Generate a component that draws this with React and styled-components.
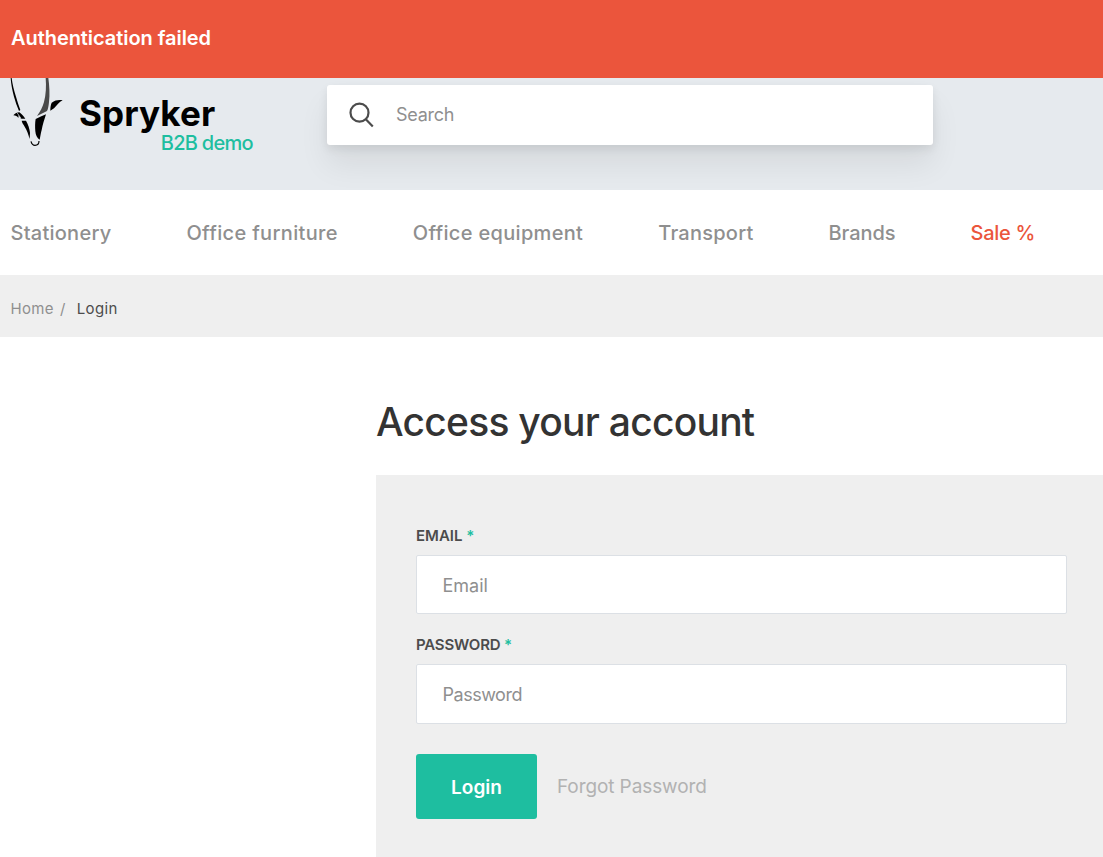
import React from "react";
import styled, { createGlobalStyle } from "styled-components";

const Global = createGlobalStyle`
  * { box-sizing: border-box; }
  html, body { margin: 0; height: 100%; overflow: hidden; background: #fff; }
  body { font-family: Inter, "Liberation Sans", sans-serif; color: #333; }
  button, input { font-family: inherit; }
`;

const Page = styled.div`
  height: 857px;
  overflow: hidden;
`;

const Alert = styled.div`
  height: 78px;
  padding: 0 11px;
  background: #eb553c;
  color: #fff;
  font-size: 20px;
  font-weight: 600;
  line-height: 76px;
  letter-spacing: -0.06px;
`;

const Header = styled.header`
  display: flex;
  align-items: flex-start;
  height: 112px;
  padding-left: 5px;
  background: #e6eaee;
`;

const Logo = styled.a`
  display: flex;
  width: 322px;
`;

const LogoMark = styled.svg`
  display: block;
  width: 65px;
  height: 72px;
`;

const LogoText = styled.div`
  display: flex;
  flex-direction: column;
  align-items: flex-end;
  width: 183px;
  padding: 14px 0 0 9px;
`;

const Wordmark = styled.span`
  align-self: flex-start;
  color: #000;
  font-size: 35px;
  font-weight: 700;
  line-height: 42px;
  letter-spacing: 0.1px;
`;

const Edition = styled.span`
  margin-top: -3px;
  color: #1ebea0;
  font-size: 20px;
  font-weight: 500;
  line-height: 24px;
  letter-spacing: -0.7px;
  white-space: nowrap;
`;

const SearchBox = styled.label`
  display: flex;
  align-items: center;
  width: 606px;
  height: 60px;
  margin-top: 7px;
  padding-left: 22px;
  border-radius: 3px;
  background: #fff;
  box-shadow: 0 20px 30px rgba(0, 0, 0, 0.07), 0 4px 10px rgba(0, 0, 0, 0.08);
`;

const SearchIcon = styled.svg`
  width: 26px;
  height: 26px;
  margin-right: 21px;
`;

const SearchInput = styled.input`
  flex: 1;
  border: 0;
  outline: 0;
  padding: 0 0 2px;
  background: none;
  font-size: 18px;
  letter-spacing: -0.25px;
  &::placeholder { color: #8f8f8f; opacity: 1; }
`;

const Nav = styled.nav`
  display: flex;
  align-items: center;
  gap: 75px;
  height: 85px;
  padding-left: 10.5px;
`;

const NavLink = styled.a`
  color: ${(p) => (p.$sale ? "#eb553c" : "#8f8f8f")};
  font-size: 20px;
  font-weight: 500;
  line-height: 24px;
  letter-spacing: ${(p) => p.$tracking}px;
  white-space: nowrap;
`;

const Breadcrumb = styled.div`
  display: flex;
  align-items: center;
  height: 62px;
  padding: 5px 0 0 10.5px;
  background: #efefef;
  color: #8f8f8f;
  font-size: 15px;
  letter-spacing: 0.35px;
`;

const Slash = styled.span`
  margin: 0 11px 0 6px;
`;

const Current = styled.span`
  color: #4c4c4c;
`;

const Main = styled.main`
  margin-left: 376px;
`;

const Title = styled.h1`
  margin: 0;
  padding-top: 60px;
  height: 138px;
  color: #333;
  font-size: 39px;
  font-weight: 500;
  line-height: 50px;
  letter-spacing: -0.76px;
  white-space: nowrap;
`;

const Form = styled.form`
  width: 731px;
  height: 420px;
  padding: 50px 40px 40px;
  background: #efefef;
`;

const Field = styled.div`
  margin-bottom: ${(p) => p.$gap}px;
`;

const Label = styled.label`
  display: block;
  height: 30px;
  color: #4c4c4c;
  font-size: 15px;
  font-weight: 600;
  line-height: 22px;
  letter-spacing: ${(p) => p.$tracking}px;
`;

const Star = styled.span`
  color: #1ebea0;
`;

const Input = styled.input`
  display: block;
  width: 651px;
  height: ${(p) => p.$height}px;
  padding: 1px 25.6px 0;
  border: 1px solid #dce0e5;
  border-radius: 2px;
  outline: 0;
  background: #fff;
  font-size: 18px;
  letter-spacing: ${(p) => p.$tracking}px;
  &::placeholder { color: #8f8f8f; opacity: 1; }
`;

const Actions = styled.div`
  display: flex;
  align-items: center;
  gap: 20px;
`;

const Submit = styled.button`
  width: 121px;
  height: 65px;
  padding: 1px 0 0;
  border: 0;
  border-radius: 3px;
  background: #1ebea0;
  color: #fff;
  font-size: 19px;
  font-weight: 600;
`;

const Forgot = styled.a`
  color: #b2b2b2;
  font-size: 19px;
  letter-spacing: -0.1px;
`;

const links = [
  { label: "Stationery", tracking: 0.25 },
  { label: "Office furniture", tracking: 0.33 },
  { label: "Office equipment", tracking: 0.32 },
  { label: "Transport", tracking: 0.25 },
  { label: "Brands", tracking: -0.05 },
  { label: "Sale %", tracking: -0.3, sale: true },
];

export default function App() {
  return (
    <>
      <Global />
      <Page>
        <Alert>Authentication failed</Alert>
        <Header>
          <Logo>
            <LogoMark viewBox="0 9 195 216" aria-hidden="true">
              <path d="M17 9h3c2 18 7 37 13 56 4 14 8 27 13 40l-4 3c-6-14-11-29-15-43-5-19-9-38-10-56Z" fill="#000" />
              <path d="M122 9h8c3 22 5 50 2 72-1 12-3 22-6 27l-30 15c9-12 17-26 21-42 6-22 7-47 5-72Z" fill="#4a4a4a" />
              <path d="M25 121c5-5 11-9 18-9 6 4 13 11 18 19H48l-7-11-1 9c-3-5-8-8-15-8Z" fill="#000" />
              <path d="M36 113l12 17" stroke="#e6eaee" strokeWidth="2" />
              <path d="M50 137h13c6 10 11 24 12 36l-1 19c-4-14-8-26-15-37-4-7-8-12-9-18Z" fill="#000" />
              <path d="M92 132c10-5 21-9 31-14-5 16-10 31-13 47-3 10-4 20-6 29-8-5-12-13-13-25-1-13-1-26 1-37Z" fill="#000" />
              <path d="M136 107c0-9 1-17 4-24 11-8 22-9 33-7-11 5-17 15-26 24l-11 7Z" fill="#000" />
              <path d="M78 199c2 8 6 12 12 12 7 0 12-4 12-13" fill="none" stroke="#000" strokeWidth="3.5" />
            </LogoMark>
            <LogoText>
              <Wordmark>Spryker</Wordmark>
              <Edition>B2B demo</Edition>
            </LogoText>
          </Logo>
          <SearchBox>
            <SearchIcon viewBox="0 0 26 26" fill="none" stroke="#4c4c4c" strokeWidth="2.2">
              <circle cx="10.5" cy="10.7" r="9" />
              <path d="M16.8 17.2l7 7.2" />
            </SearchIcon>
            <SearchInput placeholder="Search" />
          </SearchBox>
        </Header>
        <Nav>
          {links.map((l) => (
            <NavLink key={l.label} $tracking={l.tracking} $sale={l.sale}>{l.label}</NavLink>
          ))}
        </Nav>
        <Breadcrumb>
          <span>Home</span>
          <Slash>/</Slash>
          <Current>Login</Current>
        </Breadcrumb>
        <Main>
          <Title>Access your account</Title>
          <Form>
            <Field $gap={20}>
              <Label $tracking={0}>EMAIL <Star>*</Star></Label>
              <Input $height={59} $tracking={-0.05} placeholder="Email" />
            </Field>
            <Field $gap={30}>
              <Label $tracking={-0.2}>PASSWORD <Star>*</Star></Label>
              <Input $height={60} $tracking={-0.5} type="password" placeholder="Password" />
            </Field>
            <Actions>
              <Submit type="button">Login</Submit>
              <Forgot>Forgot Password</Forgot>
            </Actions>
          </Form>
        </Main>
      </Page>
    </>
  );
}
